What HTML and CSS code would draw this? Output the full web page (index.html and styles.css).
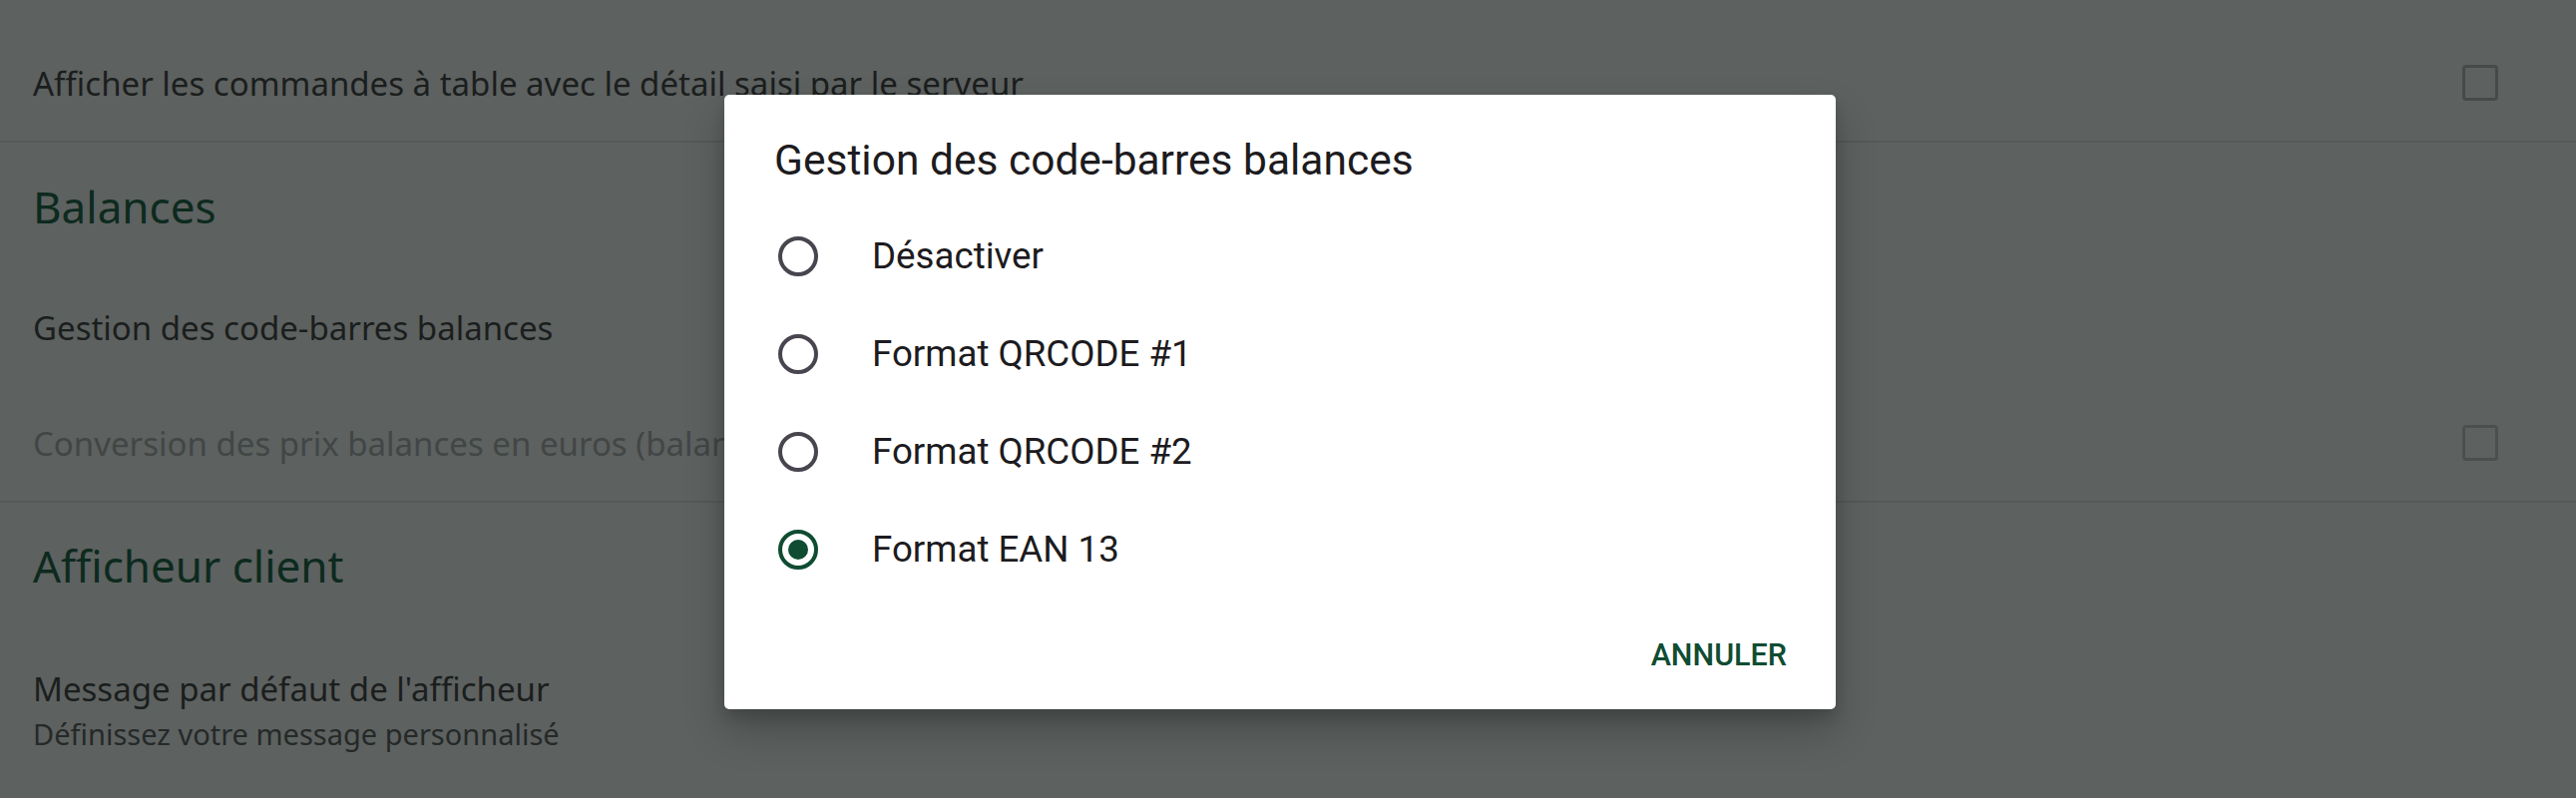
FILE: index.html
```html
<!DOCTYPE html>
<html lang="fr">
<head>
<meta charset="utf-8">
<title>Paramètres</title>
<link rel="stylesheet" href="styles.css">
</head>
<body>
<main class="settings">
  <div class="row row-first">
    <span class="label">Afficher les commandes à table avec le détail saisi par le serveur</span>
    <span class="checkbox"></span>
  </div>
  <div class="divider"></div>
  <h2 class="section section-balances">Balances</h2>
  <div class="row row-gestion">
    <span class="label">Gestion des code-barres balances</span>
  </div>
  <div class="row row-conversion disabled">
    <span class="label">Conversion des prix balances en euros (balances en francs)</span>
    <span class="checkbox"></span>
  </div>
  <div class="divider"></div>
  <h2 class="section section-afficheur">Afficheur client</h2>
  <div class="row-two">
    <span class="label">Message par défaut de l'afficheur</span>
    <span class="sub">Définissez votre message personnalisé</span>
  </div>
</main>

<div class="dialog" role="dialog">
  <h1 class="dialog-title">Gestion des code-barres balances</h1>
  <ul class="options">
    <li class="option"><span class="radio"></span><span class="opt-text">Désactiver</span></li>
    <li class="option"><span class="radio"></span><span class="opt-text">Format QRCODE #1</span></li>
    <li class="option"><span class="radio"></span><span class="opt-text">Format QRCODE #2</span></li>
    <li class="option"><span class="radio checked"></span><span class="opt-text">Format EAN 13</span></li>
  </ul>
  <div class="actions">
    <button class="btn-text">ANNULER</button>
  </div>
</div>
</body>
</html>
```

FILE: styles.css
```css
html, body {
  margin: 0;
  padding: 0;
  width: 2582px;
  height: 800px;
  overflow: hidden;
  background: #5d6160;
}

body {
  font-family: "Noto Sans", "Open Sans", sans-serif;
  color: #1b1e1d;
  position: relative;
}

.settings {
  display: flex;
  flex-direction: column;
}

.row {
  display: flex;
  align-items: center;
  justify-content: space-between;
  padding: 0 78px 0 33px;
  font-size: 33px;
  white-space: nowrap;
  overflow: hidden;
}

.row-first {
  height: 141px;
  padding-top: 25px;
  box-sizing: border-box;
}

.row-gestion {
  height: 115px;
}

.row-conversion {
  height: 116px;
}

.disabled .label {
  color: #424645;
}

.disabled .checkbox {
  border-color: #4b4f4e;
}

.checkbox {
  width: 36px;
  height: 36px;
  box-sizing: border-box;
  border: 3.5px solid #464a49;
  border-radius: 4px;
  flex: none;
}

.divider {
  height: 2px;
  background: #555958;
}

.section {
  margin: 0;
  padding: 0 33px;
  font-weight: 400;
  font-size: 44px;
  color: #0d2a1e;
  display: flex;
  align-items: center;
}

.section-balances {
  height: 128px;
}

.section-afficheur {
  height: 126px;
}

.row-two {
  display: flex;
  flex-direction: column;
  padding: 38px 33px 0;
}

.row-two .label {
  font-size: 33px;
  line-height: 46px;
}

.row-two .sub {
  font-size: 29px;
  line-height: 44px;
  color: #252928;
}

/* dialog */
.dialog {
  position: absolute;
  left: 726px;
  top: 95px;
  width: 1114px;
  height: 616px;
  box-sizing: border-box;
  background: #ffffff;
  border-radius: 5px;
  box-shadow: 0 22px 40px rgba(0, 0, 0, 0.22), 0 8px 14px rgba(0, 0, 0, 0.14);
  padding: 42px 49px 0 50px;
  font-family: Roboto, "Noto Sans", sans-serif;
  color: #1d1b20;
  display: flex;
  flex-direction: column;
}

.dialog-title {
  margin: 0;
  font-size: 42.5px;
  font-weight: 400;
  line-height: 48px;
  height: 48px;
  margin-bottom: 23px;
}

.options {
  list-style: none;
  margin: 0;
  padding: 0;
}

.option {
  height: 98px;
  display: flex;
  align-items: center;
}

.radio {
  width: 40px;
  height: 40px;
  box-sizing: border-box;
  border: 4px solid #49454f;
  border-radius: 50%;
  margin-left: 4px;
  margin-right: 54px;
  display: flex;
  align-items: center;
  justify-content: center;
  flex: none;
}

.radio.checked {
  border-color: #0f4c32;
}

.radio.checked::after {
  content: "";
  width: 20px;
  height: 20px;
  border-radius: 50%;
  background: #0f4c32;
}

.opt-text {
  font-size: 36.7px;
  line-height: 44px;
}

.actions {
  display: flex;
  justify-content: flex-end;
  margin-top: auto;
  height: 72px;
  align-items: flex-start;
}

.btn-text {
  background: none;
  border: none;
  padding: 0;
  font-family: Roboto, sans-serif;
  font-weight: 500;
  font-size: 30.5px;
  line-height: 36px;
  letter-spacing: 0;
  color: #0f4c32;
}
```
